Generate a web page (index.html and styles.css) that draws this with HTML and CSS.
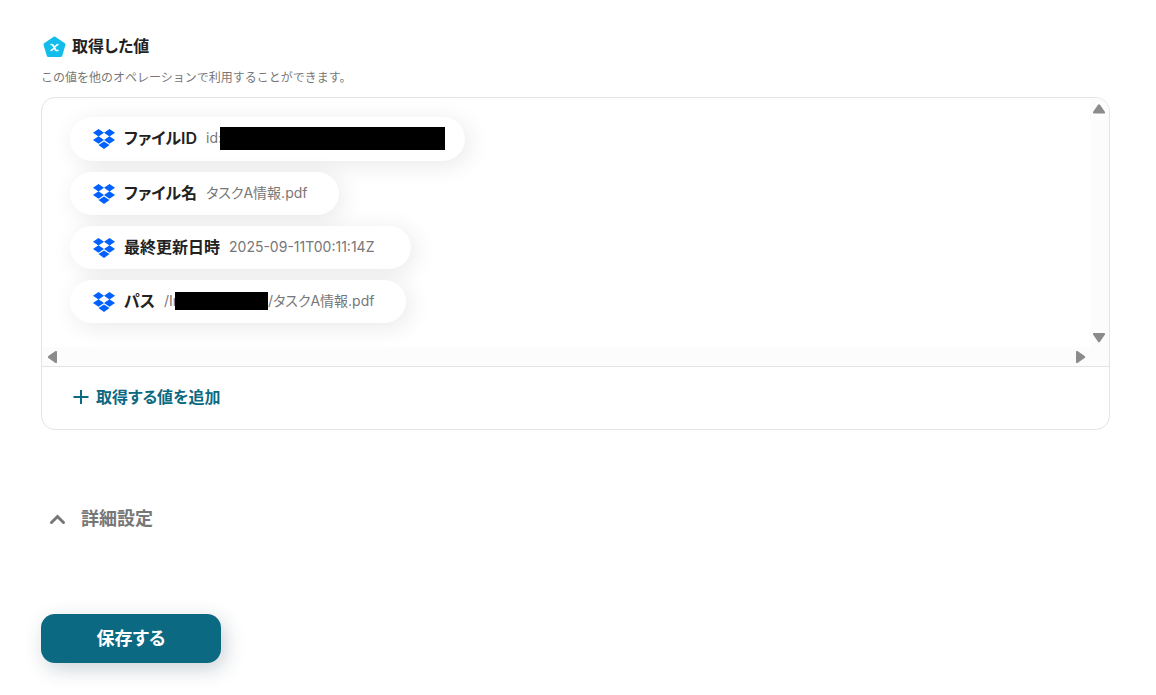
FILE: index.html
```html
<!DOCTYPE html>
<html lang="ja">
<head>
<meta charset="utf-8">
<title>取得した値</title>
<link rel="stylesheet" href="styles.css">
</head>
<body>
<svg width="0" height="0" class="defs" aria-hidden="true">
  <symbol id="dropbox" viewBox="0 0 22 20">
    <path fill="#0061ff" d="M5.500 0 11 3.700 5.500 7.400 0 3.700ZM16.500 0 22 3.700 16.500 7.400 11 3.700ZM5.500 7.300 11 11 5.500 14.700 0 11ZM16.500 7.300 22 11 16.500 14.700 11 11ZM11 12.400 16.500 16 11 20 5.500 16Z"/>
  </symbol>
</svg>
<main class="page">
  <section>
    <h2 class="title">
      <svg class="title-icon" viewBox="0 0 24 24" aria-hidden="true">
        <path d="M12.500 4 22 10.500 18.700 21.500H6.300L3 10.500Z" fill="#12bdec" stroke="#12bdec" stroke-width="3" stroke-linejoin="round"/>
        <path d="M8.500 10.500h1q1 0 1.500.8l2.500 4.400q.5.800 1.500.8h1.500M16.500 10.500q-1.300 0-2.200 1l-3.600 4q-1 1-2.200 1" fill="none" stroke="#fff" stroke-width="1.700"/>
      </svg>
      取得した値
    </h2>
    <p class="note">この値を他のオペレーションで利用することができます。</p>
    <div class="panel">
      <div class="viewport">
        <ul class="chips">
          <li class="chip">
            <svg class="chip-icon" aria-hidden="true"><use href="#dropbox"/></svg>
            <span class="chip-label">ファイルID</span>
            <span class="chip-value">id:<span class="mask mask-wide"></span></span>
          </li>
          <li class="chip">
            <svg class="chip-icon" aria-hidden="true"><use href="#dropbox"/></svg>
            <span class="chip-label">ファイル名</span>
            <span class="chip-value">タスクA情報.pdf</span>
          </li>
          <li class="chip">
            <svg class="chip-icon" aria-hidden="true"><use href="#dropbox"/></svg>
            <span class="chip-label">最終更新日時</span>
            <span class="chip-value chip-date">2025-09-11T00:11:14Z</span>
          </li>
          <li class="chip">
            <svg class="chip-icon" aria-hidden="true"><use href="#dropbox"/></svg>
            <span class="chip-label">パス</span>
            <span class="chip-value">/Ir<span class="mask mask-small"></span>/タスクA情報.pdf</span>
          </li>
        </ul>
        <div class="track track-y">
          <svg class="arrow" viewBox="0 0 14 14"><path d="M6 2.800Q7 1.800 8 2.800L13 10Q13.500 11.500 12 11.500H2Q.5 11.500 1 10Z"/></svg>
          <svg class="arrow" viewBox="0 0 14 14"><path d="M6 11.700Q7 12.700 8 11.700L13 4.500Q13.500 3 12 3H2Q.5 3 1 4.500Z"/></svg>
        </div>
        <div class="track track-x">
          <svg class="arrow" viewBox="0 0 14 14"><path d="M2.300 6Q1.300 7 2.300 8L9.500 13Q11 13.500 11 12V2Q11 .5 9.500 1Z"/></svg>
          <svg class="arrow" viewBox="0 0 14 14"><path d="M11.700 6Q12.700 7 11.700 8L4.500 13Q3 13.500 3 12V2Q3 .5 4.500 1Z"/></svg>
        </div>
      </div>
      <div class="panel-foot">
        <button type="button" class="add">
          <svg class="add-icon" viewBox="0 0 16 16" aria-hidden="true"><path d="M8 1v14M.5 8h15" stroke="currentColor" stroke-width="2"/></svg>
          取得する値を追加
        </button>
      </div>
    </div>
  </section>
  <button type="button" class="details">
    <svg class="details-icon" viewBox="0 0 18 12" aria-hidden="true"><path d="M2.500 9.500 8.500 3.500 14.500 9.500" fill="none" stroke="currentColor" stroke-width="3" stroke-linecap="round"/></svg>
    詳細設定
  </button>
  <button type="button" class="save">保存する</button>
</main>
</body>
</html>
```
FILE: styles.css
```css
* {
  box-sizing: border-box;
}

body {
  margin: 0;
  background: #fff;
  color: #222;
  font-family: Inter, "Noto Sans CJK JP", sans-serif;
  font-feature-settings: "palt";
}

button {
  border: 0;
  background: none;
  font: inherit;
  font-feature-settings: inherit;
  cursor: pointer;
}

.defs {
  position: absolute;
}

.page {
  display: flex;
  flex-direction: column;
  align-items: flex-start;
  padding: 34px 46px 32px 41px;
}

.page > section {
  width: 100%;
}

.title {
  display: flex;
  align-items: center;
  gap: 6px;
  margin: 0;
  padding-left: 1px;
  font-size: 16px;
  line-height: 24px;
  font-weight: 600;
}

.title-icon {
  width: 24px;
  height: 24px;
}

.note {
  margin: 10px 0;
  color: #777;
  font-size: 12px;
  line-height: 19px;
  font-feature-settings: normal;
}

.panel {
  border: 1px solid #e4e4e4;
  border-radius: 14px;
}

.viewport {
  display: grid;
  grid-template-columns: 1fr 19px;
  grid-template-rows: auto 19px;
  border-bottom: 1px solid #e4e4e4;
}

.chips {
  display: flex;
  flex-direction: column;
  align-items: flex-start;
  gap: 11px;
  margin: 0;
  padding: 19px 28px 24px;
  list-style: none;
  overflow: hidden;
}

.chip {
  display: flex;
  align-items: center;
  gap: 9px;
  min-height: 43px;
  padding: 0 32px 0 23px;
  border-radius: 22px;
  background: #fff;
  box-shadow: 4px 4px 24px rgba(0, 0, 0, 0.09);
}

.chip:first-child {
  min-height: 44px;
  padding-right: 20px;
}

.chip-icon {
  width: 22px;
  height: 20px;
}

.chip-label,
.chip-value {
  padding-bottom: 2px;
}

.chip-label {
  font-size: 16px;
  line-height: 24px;
  font-weight: 600;
}

.chip-value {
  display: flex;
  align-items: center;
  color: #777;
  font-size: 14px;
  line-height: 20px;
}

.chip-date {
  min-width: 150px;
}

.mask {
  background: #000;
}

.mask-wide {
  width: 225px;
  height: 23px;
  margin-left: -2px;
}

.mask-small {
  width: 93px;
  height: 18px;
  margin-left: -3px;
}

.track {
  display: flex;
  align-items: center;
  justify-content: space-between;
  background: #fcfcfc;
}

.track-y {
  flex-direction: column;
  padding: 4px 1px 3px 0;
  border-top-right-radius: 13px;
}

.track-x {
  grid-column: 1 / -1;
  padding: 0 22px 0 4px;
}

.arrow {
  width: 14px;
  height: 14px;
  fill: #8b8b8b;
}

.panel-foot {
  padding: 18px 31px 20px;
}

.add {
  display: flex;
  align-items: center;
  gap: 7px;
  padding: 0;
  color: #0b6981;
  font-size: 16px;
  line-height: 24px;
  font-weight: 600;
}

.add-icon {
  width: 16px;
  height: 16px;
}

.details {
  display: flex;
  align-items: center;
  gap: 14px;
  margin-top: 75px;
  padding: 0 8px;
  color: #777;
  font-size: 18px;
  line-height: 28px;
  font-weight: 600;
}

.details-icon {
  width: 18px;
  height: 12px;
}

.save {
  min-width: 180px;
  margin-top: 81px;
  padding: 11px 24px 10px;
  border-radius: 14px;
  background: #0b6981;
  box-shadow: 4px 6px 20px rgba(20, 50, 70, 0.22);
  color: #fff;
  font-size: 18px;
  line-height: 28px;
  font-weight: 600;
}
```
